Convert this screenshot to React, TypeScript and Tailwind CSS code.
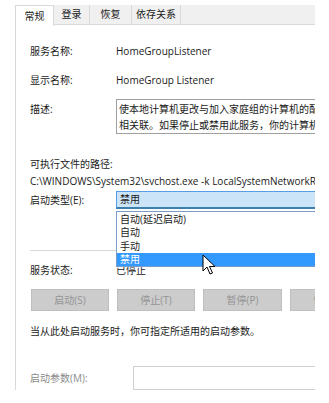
export default function App() {
  const font = { fontFamily: "'Open Sans', 'Noto Sans CJK SC', sans-serif" }
  return (
    <div className="w-[329px] h-[403px] bg-white overflow-hidden relative text-[10px] text-[#1a1a1a]" style={font}>
      <div className="ml-[15px] mt-[5px] w-[300px] overflow-hidden relative">
        {/* Tabs */}
        <div className="h-[20px] flex bg-[#f0f0f0] border-b border-[#d9d9d9]">
          <div className="w-[39px] h-[21px] bg-white border-l border-t border-r border-[#d9d9d9] flex items-center justify-center -mb-px">常规</div>
          <div className="w-[36px] flex items-center justify-center border-r border-[#d9d9d9]">登录</div>
          <div className="w-[42px] flex items-center justify-center border-r border-[#d9d9d9]">恢复</div>
          <div className="w-[49px] flex items-center justify-center border-r border-[#d9d9d9]">依存关系</div>
        </div>

        {/* Panel */}
        <div className="h-[365px] border-l border-[#d9d9d9] pl-[14px] flex flex-col">
          <div className="h-[17px]" />
          <div className="h-[20px] flex items-center">
            <div className="w-[86px]">服务名称:</div>
            <div>HomeGroupListener</div>
          </div>
          <div className="h-[9px]" />
          <div className="h-[20px] flex items-center">
            <div className="w-[86px]">显示名称:</div>
            <div>HomeGroup Listener</div>
          </div>
          <div className="h-[9px]" />
          <div className="h-[35px] flex">
            <div className="w-[86px] pt-[3px]">描述:</div>
            <div className="flex-1 border border-[#a0a0a0] border-r-0 pl-[2px] pt-px leading-[16px] whitespace-nowrap overflow-hidden">
              <div>使本地计算机更改与加入家庭组的计算机的配置</div>
              <div>相关联。如果停止或禁用此服务，你的计算机将</div>
            </div>
          </div>
          <div className="h-[23px]" />
          <div className="h-[16px] flex items-center">可执行文件的路径:</div>
          <div className="h-[18px] flex items-center whitespace-nowrap">C:\WINDOWS\System32\svchost.exe -k LocalSystemNetworkRestricted</div>
          <div className="h-[1px]" />
          <div className="h-[18px] flex items-center">
            <div className="w-[86px]">启动类型(E):</div>
            <div className="flex-1 h-full bg-[#cce4f7] border border-[#569de5] border-b-2 border-b-[#3c7fb1] border-r-0 flex items-center pl-[3px]">禁用</div>
          </div>
          <div className="h-[41px]" />
          <div className="w-[86px] h-px bg-[#d9d9d9]" />
          <div className="h-[11px]" />
          <div className="h-[18px] flex items-center">
            <div className="w-[86px]">服务状态:</div>
            <div>已停止</div>
          </div>
          <div className="h-[10px]" />
          <div className="h-[22px] flex gap-[8px] pl-px whitespace-nowrap">
            <div className="w-[78px] shrink-0 bg-[#cccccc] border border-[#bfbfbf] text-[#949494] flex items-center justify-center">启动(S)</div>
            <div className="w-[78px] shrink-0 bg-[#cccccc] border border-[#bfbfbf] text-[#949494] flex items-center justify-center">停止(T)</div>
            <div className="w-[79px] shrink-0 bg-[#cccccc] border border-[#bfbfbf] text-[#949494] flex items-center justify-center">暂停(P)</div>
            <div className="w-[79px] shrink-0 bg-[#cccccc] border border-[#bfbfbf] text-[#949494] flex items-center justify-center">恢复(R)</div>
          </div>
          <div className="h-[12px]" />
          <div className="h-[18px] flex items-center">当从此处启动服务时，你可指定所适用的启动参数。</div>
          <div className="h-[26px]" />
          <div className="h-[24px] flex items-center">
            <div className="w-[103px] text-[#8a8a8a]">启动参数(M):</div>
            <div className="flex-1 h-full border border-[#d0d0d0] border-r-0 bg-white" />
          </div>
        </div>

        {/* Dropdown list */}
        <div className="absolute left-[101px] top-[206px] w-[199px] h-[56px] bg-white border border-[#7a9cc6] border-r-0 flex flex-col">
          <div className="h-[14px] flex items-center pl-[3px]">自动(延迟启动)</div>
          <div className="h-[13px] flex items-center pl-[3px]">自动</div>
          <div className="h-[14px] flex items-center pl-[3px]">手动</div>
          <div className="h-[13px] flex items-center pl-[3px] bg-[#3399ff] text-white">禁用</div>
        </div>
      </div>

      {/* Cursor */}
      <svg className="absolute left-[202px] top-[254px]" width="14" height="22" viewBox="0 0 14 22">
        <path d="M1 1 L1 17 L5 13 L8 20 L10.5 19 L7.5 12.5 L13 12.5 Z" fill="white" stroke="black" strokeWidth="1" strokeLinejoin="round" />
      </svg>
    </div>
  )
}
